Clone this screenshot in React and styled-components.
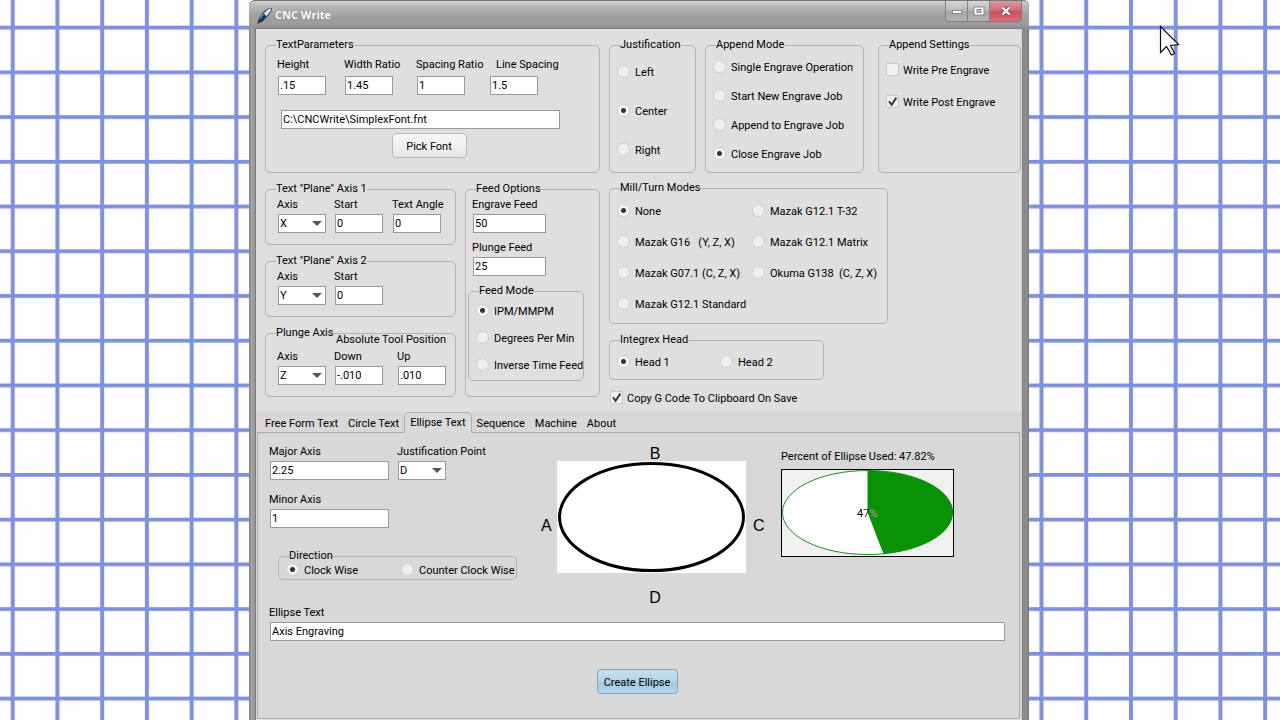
import React, { useId, useState } from 'react'
import styled, { createGlobalStyle } from 'styled-components'

const TABS = ['Free Form Text', 'Circle Text', 'Ellipse Text', 'Sequence', 'Machine', 'About']

const MILL_MODES = [
  'None',
  'Mazak G16   (Y, Z, X)',
  'Mazak G07.1 (C, Z, X)',
  'Mazak G12.1 Standard',
  'Mazak G12.1 T-32',
  'Mazak G12.1 Matrix',
  'Okuma G138  (C, Z, X)',
]

const TextField = ({ label, value, width = '48px', gap, indent }) => {
  const id = useId()
  return (
    <Field $gap={gap}>
      <Label htmlFor={id} $indent={indent}>{label}</Label>
      <TextInput id={id} type="text" defaultValue={value} $width={width} />
    </Field>
  )
}

const SelectField = ({ label, value, options }) => {
  const id = useId()
  return (
    <Field>
      <Label htmlFor={id}>{label}</Label>
      <SelectBox>
        <Select id={id} defaultValue={value}>
          {options.map((o) => <option key={o}>{o}</option>)}
        </Select>
        <Arrow viewBox="0 0 10 5"><path d="M0 0h10L5 5z" fill="#555" /></Arrow>
      </SelectBox>
    </Field>
  )
}

const RadioSet = ({ options, initial }) => {
  const name = useId()
  const [picked, setPicked] = useState(initial)
  return options.map((text) => (
    <Option key={text}>
      <Radio name={name} checked={picked === text} onChange={() => setPicked(text)} />
      <OptionText>{text}</OptionText>
    </Option>
  ))
}

const CheckOption = ({ text, checked }) => (
  <Option $gap="4px">
    <CheckHold>
      <Check defaultChecked={checked} />
      <Tick viewBox="0 0 13 13"><path d="M3 6.2l2.6 3.6L10.4 2.6" fill="none" stroke="#333" strokeWidth="1.9" /></Tick>
    </CheckHold>
    <OptionText>{text}</OptionText>
  </Option>
)

const App = () => {
  const [tab, setTab] = useState('Ellipse Text')

  return (
    <Desktop>
      <GlobalStyle />
      <Wallpaper aria-hidden="true">
        <defs>
          <pattern id="squares" x="10.7" y="25.7" width="44.73" height="44.73" patternUnits="userSpaceOnUse">
            <rect width="44.73" height="44.73" fill="#fdfdff" />
            <rect width="44.73" height="3.8" fill="#7f90d9" />
            <rect width="4" height="44.73" fill="#8092dc" />
            <rect width="4" height="3.8" fill="#7a93e8" />
          </pattern>
        </defs>
        <rect width="100%" height="100%" fill="url(#squares)" />
      </Wallpaper>

      <Window>
        <TitleBar>
          <AppIcon viewBox="0 0 17 18">
            <path d="M1 17l2-4 2 2z" fill="#222" />
            <path d="M2.5 13.5C3 9.5 7 4.5 11.5 2c2-1.2 4.5-1.5 4.5 0 0 2-6 9.5-9.5 12.5-1.5 1.2-4 .8-4-1z" fill="#1c3852" />
            <path d="M8 6c2-2.2 4.5-4 6.5-4.5 1 0 1 .8.5 1.5-1.2 2-3 4.5-4.5 6C9.5 8.500 8.500 7.500 8 6z" fill="#dfe6ec" />
            <path d="M4 11.5c1.5-2.5 2.5-3.7 3.5-4.7" stroke="#5d9cc9" strokeWidth="1.5" fill="none" />
          </AppIcon>
          <Title>CNC Write</Title>
          <WindowButtons>
            <WindowButton aria-label="Minimize">
              <svg width="12" height="10" viewBox="0 0 12 10">
                <rect x="1.5" y="4.5" width="9" height="3" fill="#fff" stroke="#8a8a8a" />
              </svg>
            </WindowButton>
            <WindowButton aria-label="Maximize">
              <svg width="12" height="10" viewBox="0 0 12 10">
                <rect x="1" y="1" width="10" height="8" fill="#fff" stroke="#8a8a8a" />
                <rect x="4" y="3.5" width="4" height="3" fill="#b5b5b5" stroke="#8a8a8a" />
              </svg>
            </WindowButton>
            <WindowButton aria-label="Close" $close>
              <svg width="12" height="10" viewBox="0 0 12 10">
                <path d="M2.5 1.5l7 7M9.5 1.5l-7 7" stroke="#8e3c4a" strokeWidth="4" />
                <path d="M2.5 1.5l7 7M9.5 1.5l-7 7" stroke="#fff" strokeWidth="2.4" />
              </svg>
            </WindowButton>
          </WindowButtons>
        </TitleBar>

        <Client>
          <Settings>
            <LeftColumn>
              <Group>
                <Legend>TextParameters</Legend>
                <Body $pad="5px 21px 14px 11px">
                  <RatioRow>
                    <TextField label="Height" value=".15" gap="5px" />
                    <TextField label="Width Ratio" value="1.45" gap="5px" />
                    <TextField label="Spacing Ratio" value="1" gap="5px" />
                    <TextField label="Line Spacing" value="1.5" gap="5px" indent="7px" />
                  </RatioRow>
                  <FontPicker>
                    <TextInput type="text" aria-label="Font file" defaultValue="C:\CNCWrite\SimplexFont.fnt" $width="279px" />
                    <Button $width="75px">Pick Font</Button>
                  </FontPicker>
                </Body>
              </Group>

              <LowerRow>
                <AxisColumn>
                  <Group>
                    <Legend>Text "Plane" Axis 1</Legend>
                    <Body $pad="1px 0 11px 11px">
                      <AxisRow>
                        <SelectField label="Axis" value="X" options={['X', 'Y', 'Z']} />
                        <TextField label="Start" value="0" />
                        <TextField label="Text Angle" value="0" />
                      </AxisRow>
                    </Body>
                  </Group>
                  <Group>
                    <Legend>Text "Plane" Axis 2</Legend>
                    <Body $pad="1px 0 11px 11px">
                      <AxisRow>
                        <SelectField label="Axis" value="Y" options={['X', 'Y', 'Z']} />
                        <TextField label="Start" value="0" />
                      </AxisRow>
                    </Body>
                  </Group>
                  <Group>
                    <Legend>Plunge Axis</Legend>
                    <Body $pad="0 0 11px 11px">
                      <ToolCaption>Absolute Tool Position</ToolCaption>
                      <AxisRow $wide>
                        <SelectField label="Axis" value="Z" options={['X', 'Y', 'Z']} />
                        <TextField label="Down" value="-.010" />
                        <TextField label="Up" value=".010" />
                      </AxisRow>
                    </Body>
                  </Group>
                </AxisColumn>

                <Group>
                  <Legend>Feed Options</Legend>
                  <Body $pad="1px 15px 15px 2px">
                    <FeedFields>
                      <TextField label="Engrave Feed" value="50" width="73px" />
                      <TextField label="Plunge Feed" value="25" width="73px" />
                    </FeedFields>
                    <Group>
                      <Legend>Feed Mode</Legend>
                      <Body $pad="6px 0 9px 7px">
                        <Options $gap="14px">
                          <RadioSet options={['IPM/MMPM', 'Degrees Per Min', 'Inverse Time Feed']} initial="IPM/MMPM" />
                        </Options>
                      </Body>
                    </Group>
                  </Body>
                </Group>
              </LowerRow>
            </LeftColumn>

            <RightColumn>
              <ModeRow>
                <Group>
                  <Legend>Justification</Legend>
                  <Body $pad="13px 0 14px 7px">
                    <Options $gap="26px">
                      <RadioSet options={['Left', 'Center', 'Right']} initial="Center" />
                    </Options>
                  </Body>
                </Group>
                <Group>
                  <Legend>Append Mode</Legend>
                  <Body $pad="8px 0 12px 7px">
                    <Options $gap="16px">
                      <RadioSet
                        options={['Single Engrave Operation', 'Start New Engrave Job', 'Append to Engrave Job', 'Close Engrave Job']}
                        initial="Close Engrave Job"
                      />
                    </Options>
                  </Body>
                </Group>
                <Group>
                  <Legend>Append Settings</Legend>
                  <Body $pad="11px 0 12px 7px">
                    <Options $gap="19px">
                      <CheckOption text="Write Pre Engrave" />
                      <CheckOption text="Write Post Engrave" checked />
                    </Options>
                  </Body>
                </Group>
              </ModeRow>

              <MillGroup>
                <Legend>Mill/Turn Modes</Legend>
                <Body $pad="9px 0 13px 7px">
                  <MillOptions>
                    <RadioSet options={MILL_MODES} initial="None" />
                  </MillOptions>
                </Body>
              </MillGroup>

              <HeadGroup>
                <Legend>Integrex Head</Legend>
                <Body $pad="8px 0 11px 7px">
                  <PairRow $first="103px">
                    <RadioSet options={['Head 1', 'Head 2']} initial="Head 1" />
                  </PairRow>
                </Body>
              </HeadGroup>

              <CopyRow>
                <CheckOption text="Copy G Code To Clipboard On Save" checked />
              </CopyRow>
            </RightColumn>
          </Settings>

          <TabArea>
            <TabList role="tablist">
              {TABS.map((t) => (
                <Tab key={t} role="tab" aria-selected={tab === t} $active={tab === t} onClick={() => setTab(t)}>
                  {t}
                </Tab>
              ))}
            </TabList>

            <Pane role="tabpanel">
              <PaneTop>
                <EllipseForm>
                  <SizeGrid>
                    <TextField label="Major Axis" value="2.25" width="119px" />
                    <SelectField label="Justification Point" value="D" options={['A', 'B', 'C', 'D']} />
                    <TextField label="Minor Axis" value="1" width="119px" />
                  </SizeGrid>
                  <DirectionGroup>
                    <Legend>Direction</Legend>
                    <Body $pad="0 0 3px 7px">
                      <PairRow $first="115px">
                        <RadioSet options={['Clock Wise', 'Counter Clock Wise']} initial="Clock Wise" />
                      </PairRow>
                    </Body>
                  </DirectionGroup>
                </EllipseForm>

                <Diagram>
                  <EllipsePicture viewBox="0 0 189 112">
                    <rect width="189" height="112" fill="#fff" />
                    <ellipse cx="94.5" cy="56" rx="92" ry="53.5" fill="none" stroke="#000" strokeWidth="3" />
                  </EllipsePicture>
                  <Letter $area="b">B</Letter>
                  <Letter $area="a" $side>A</Letter>
                  <Letter $area="c" $side>C</Letter>
                  <Letter $area="d">D</Letter>
                </Diagram>

                <Usage>
                  <UsageText>Percent of Ellipse Used: 47.82%</UsageText>
                  <Pie viewBox="0 0 173 88">
                    <rect x="0.5" y="0.5" width="172" height="87" fill="#f0f0f0" stroke="#000" />
                    <ellipse cx="86.5" cy="43.5" rx="85" ry="42" fill="#fff" stroke="#1f8f1f" />
                    <path d="M86.5 43.5V1.5A85 42 0 0 1 102.4 84.8z" fill="#0a9206" />
                    <text x="76" y="48">
                      <tspan fill="#000">4</tspan><tspan fill="#222">7</tspan><tspan fill="#b58fb8">%</tspan>
                    </text>
                  </Pie>
                </Usage>
              </PaneTop>

              <TextField label="Ellipse Text" value="Axis Engraving" width="auto" />
              <Actions>
                <Button $width="81px" $primary>Create Ellipse</Button>
              </Actions>
            </Pane>
          </TabArea>
        </Client>
      </Window>

      <Cursor viewBox="-1 -1 21 32" aria-hidden="true">
        <path d="M0.5 0.5V26.5L6.5 20.5L11.5 29L14.5 27.5L10.5 19.5L18.5 18.5Z" fill="#fff" stroke="#111" strokeWidth="1.2" />
      </Cursor>
    </Desktop>
  )
}

export default App

const GlobalStyle = createGlobalStyle`
* {
  box-sizing: border-box;
}
body {
  margin: 0;
  background: #fdfdff;
}
body, button, input, select {
  font-family: Roboto, "Liberation Sans", sans-serif;
  font-size: 11px;
  line-height: 13px;
  color: #000;
}
`

const Desktop = styled.div`
position: relative;
display: flex;
justify-content: center;
min-height: 100vh;
padding-right: 2px;
overflow: hidden;
`
const Wallpaper = styled.svg`
position: absolute;
inset: 0;
width: 100%;
height: 100%;
`
const Cursor = styled.svg`
position: absolute;
left: 1159px;
top: 25px;
width: 21px;
height: 32px;
pointer-events: none;
`

/* window frame */
const Window = styled.main`
position: relative;
display: flex;
flex-direction: column;
width: 100%;
max-width: 780px;
padding: 0 6px;
border-radius: 6px 6px 0 0;
background: linear-gradient(90deg, #777 0, #8f8f8f 1px, #a8a8a8 3px, #959595 5px, transparent 6px),
  linear-gradient(270deg, #6e6e6e 0, #858585 1px, #909090 3px, #858585 5px, transparent 6px),
  #999;
`
const TitleBar = styled.header`
display: flex;
align-items: flex-start;
height: 28px;
margin: 0 -6px;
padding: 1px 7px 0;
border-top: 1px solid #777;
border-radius: 6px 6px 0 0;
background: linear-gradient(#d2d2d2, #b9b9b9 5px, #a0a0a0 15px, #9b9b9b 24px, #8f8f8f);
`
const AppIcon = styled.svg`
width: 17px;
height: 18px;
margin-top: 5px;
`
const Title = styled.h1`
flex: 1;
margin: 6px 0 0 2px;
font: bold 11px/14px "Open Sans", "Noto Sans", sans-serif;
color: #fff;
text-shadow: 0 0 1px #666;
`
const WindowButtons = styled.div`
display: flex;
margin: -1px 0 0;
border: 1px solid #7d7d7d;
border-top: 0;
border-radius: 0 0 4px 4px;
overflow: hidden;
`
const WindowButton = styled.button`
display: flex;
align-items: center;
justify-content: center;
width: ${({ $close }) => ($close ? '31px' : '22px')};
height: 20px;
padding: 0;
border: 0;
border-right: ${({ $close }) => ($close ? '0' : '1px solid #858585')};
background: ${({ $close }) => ($close
    ? 'linear-gradient(#d99aa2, #d36d79 45%, #cc4f5f 55%, #de6d78)'
    : 'linear-gradient(#d8d8d8, #b9b9b9 45%, #a3a3a3 55%, #b5b5b5)')};
`
const Client = styled.div`
flex: 1;
display: flex;
flex-direction: column;
padding-bottom: 2px;
border: 1px solid #7e7e7e;
border-bottom: 0;
background: #dfdfdf;
`

/* groups and fields */
const Group = styled.fieldset`
min-width: 0;
margin: 0;
padding: 0;
border: 1px solid #b2b2b2;
border-radius: 5px;
white-space: nowrap;
`
const Legend = styled.legend`
margin-left: 10px;
padding: 1px 0 3px;
line-height: 13px;
`
const Body = styled.div`
margin-top: -2px;
padding: ${({ $pad }) => $pad};
`
const Field = styled.div`
display: flex;
flex-direction: column;
gap: ${({ $gap }) => $gap || '3px'};
`
const Label = styled.label`
padding-top: 1px;
padding-left: ${({ $indent }) => $indent || '0'};
white-space: nowrap;
`
const TextInput = styled.input`
width: ${({ $width }) => $width};
height: 19px;
margin: 0 0 0 1px;
padding: 0 1px;
border: 1px solid #999;
border-radius: 0;
background: #fff;
outline: none;
`
const SelectBox = styled.div`
position: relative;
width: 48px;
margin-left: 1px;
`
const Select = styled.select`
display: block;
width: 100%;
height: 19px;
padding: 0 14px 0 1px;
border: 1px solid #999;
border-radius: 0;
background: #fff;
appearance: none;
outline: none;
`
const Arrow = styled.svg`
position: absolute;
right: 4px;
top: 7px;
width: 10px;
height: 5px;
pointer-events: none;
`
const Options = styled.div`
display: flex;
flex-direction: column;
gap: ${({ $gap }) => $gap};
`
const Option = styled.label`
display: flex;
align-items: flex-start;
gap: ${({ $gap }) => $gap || '5px'};
height: 13px;
white-space: pre;
`
const OptionText = styled.span`
padding-top: 1px;
`
const Radio = styled.input.attrs({ type: 'radio' })`
appearance: none;
flex: none;
width: 13px;
height: 13px;
margin: 0;
border: 1px solid #d0d0d0;
border-radius: 50%;
background: #efefef;
&:checked {
  background: radial-gradient(circle, #333 0, #333 2px, #f4f4f4 3px);
}
`
const CheckHold = styled.span`
position: relative;
display: flex;
`
const Tick = styled.svg`
position: absolute;
inset: 0;
width: 13px;
height: 13px;
display: none;
pointer-events: none;
`
const Check = styled.input.attrs({ type: 'checkbox' })`
appearance: none;
width: 13px;
height: 13px;
margin: 0;
border: 1px solid #c8c8c8;
border-radius: 2px;
background: #f1f1f1;
&:checked + ${Tick} {
  display: block;
}
`
const Button = styled.button`
width: ${({ $width }) => $width};
height: 25px;
padding: 1px 0 0;
border: 1px solid ${({ $primary }) => ($primary ? '#8ba4bb' : '#b9b9b9')};
border-radius: 4px;
white-space: nowrap;
background: ${({ $primary }) => ($primary
    ? 'linear-gradient(#c3dfec, #b5d7e8 45%, #9fcbdf 60%, #b4dcec)'
    : 'linear-gradient(#f6f6f6, #f1f1f1 50%, #e6e6e6)')};
`

/* upper settings */
const Settings = styled.section`
display: flex;
gap: 9px;
padding: 8px 1px 8px 9px;
`
const LeftColumn = styled.div`
flex: none;
display: flex;
flex-direction: column;
gap: 8px;
width: 335px;
`
const RatioRow = styled.div`
display: grid;
grid-template-columns: 67px 72px 73px 1fr;
`
const FontPicker = styled.div`
display: flex;
flex-direction: column;
gap: 4px;
margin: 15px 0 0 3px;
button {
  align-self: center;
}
`
const LowerRow = styled.div`
display: grid;
grid-template-columns: 191px 1fr;
gap: 9px;
`
const AxisColumn = styled.div`
display: flex;
flex-direction: column;
gap: 8px;
`
const AxisRow = styled.div`
display: grid;
grid-template-columns: 57px ${({ $wide }) => ($wide ? '63px' : '58px')} 1fr;
`
const ToolCaption = styled.div`
margin: -9px 0 3px;
padding-left: 59px;
`
const FeedFields = styled.div`
display: flex;
flex-direction: column;
gap: 7px;
margin-bottom: 7px;
padding-left: 4px;
`
const RightColumn = styled.div`
flex: 1;
display: flex;
flex-direction: column;
`
const ModeRow = styled.div`
display: grid;
grid-template-columns: 87px 159px 1fr;
column-gap: 9px;
margin-bottom: 7px;
> :last-child {
  margin-left: 5px;
}
`
const MillGroup = styled(Group)`
width: 279px;
margin-bottom: 8px;
`
const MillOptions = styled.div`
display: grid;
grid-template-columns: 135px 1fr;
grid-template-rows: repeat(4, 13px);
grid-auto-flow: column;
row-gap: 18px;
`
const HeadGroup = styled(Group)`
width: 215px;
`
const PairRow = styled.div`
display: grid;
grid-template-columns: ${({ $first }) => $first} 1fr;
`
const CopyRow = styled.div`
margin: 11px 0 0 1px;
`

/* tabs */
const TabArea = styled.section`
flex: 1;
display: flex;
flex-direction: column;
background: #d8d8d8;
`
const TabList = styled.div`
display: flex;
align-items: flex-end;
height: 20px;
padding-left: 4px;
`
const Tab = styled.button`
position: relative;
height: ${({ $active }) => ($active ? '21px' : '20px')};
margin-bottom: ${({ $active }) => ($active ? '-1px' : '0')};
padding: ${({ $active }) => ($active ? '0 5px 2px' : '2px 5px 0')};
border: ${({ $active }) => ($active ? '1px solid #b0b0b0' : '0')};
border-bottom: 0;
border-radius: 5px 5px 0 0;
background: ${({ $active }) => ($active ? '#dadada' : 'transparent')};
`
const Pane = styled.div`
flex: 1;
margin: 0 2px 0 1px;
padding: 11px 14px 24px 11px;
border: 1px solid #ababab;
`
const PaneTop = styled.div`
display: flex;
gap: 16px;
min-height: 160px;
`
const EllipseForm = styled.div`
flex: none;
width: 249px;
`
const SizeGrid = styled.div`
display: grid;
grid-template-columns: 128px 1fr;
row-gap: 12px;
`
const DirectionGroup = styled(Group)`
margin: 20px 1px 0 9px;
`
const Diagram = styled.div`
display: grid;
grid-template-columns: 23px 189px 19px;
grid-template-rows: 14px 112px 32px;
grid-template-areas: ". b ." "a picture c" ". d .";
padding-top: 3px;
`
const Letter = styled.div`
grid-area: ${({ $area }) => $area};
align-self: ${({ $side }) => ($side ? 'center' : 'end')};
padding: ${({ $side }) => ($side ? '18px 0 0 7px' : '0 0 0 7px')};
font: 16px/14px "Liberation Sans", Arial, sans-serif;
text-align: ${({ $side }) => ($side ? 'left' : 'center')};
`
const EllipsePicture = styled.svg`
grid-area: picture;
width: 189px;
height: 112px;
`
const Usage = styled.div`
display: flex;
flex-direction: column;
gap: 6px;
padding-top: 6px;
`
const UsageText = styled.div`
white-space: nowrap;
`
const Pie = styled.svg`
width: 173px;
height: 88px;
`
const Actions = styled.div`
display: flex;
justify-content: center;
padding-top: 28px;
`
